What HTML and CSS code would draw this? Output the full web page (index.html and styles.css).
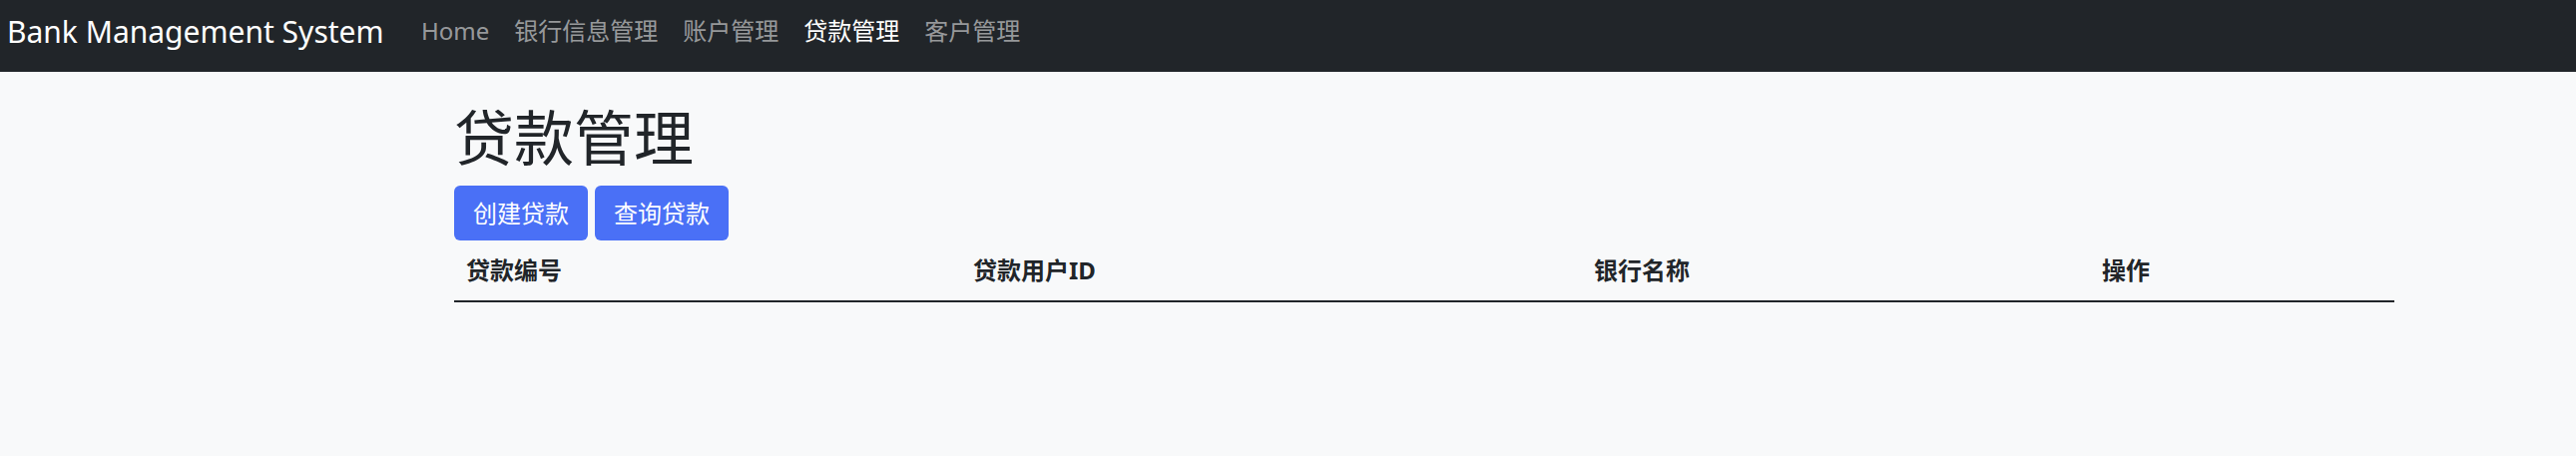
FILE: index.html
```html
<!DOCTYPE html>
<html lang="zh-CN">
<head>
<meta charset="utf-8">
<title>Bank Management System</title>
<link rel="stylesheet" href="styles.css">
</head>
<body>
<nav class="navbar">
  <a class="brand" href="#">Bank Management System</a>
  <ul class="nav">
    <li><a class="nav-link" href="#">Home</a></li>
    <li><a class="nav-link" href="#">银行信息管理</a></li>
    <li><a class="nav-link" href="#">账户管理</a></li>
    <li><a class="nav-link active" href="#">贷款管理</a></li>
    <li><a class="nav-link" href="#">客户管理</a></li>
  </ul>
</nav>
<main class="content">
  <h1 class="title">贷款管理</h1>
  <div class="actions">
    <button class="btn">创建贷款</button>
    <button class="btn">查询贷款</button>
  </div>
  <table class="table">
    <thead>
      <tr>
        <th class="col-id">贷款编号</th>
        <th class="col-user">贷款用户ID</th>
        <th class="col-bank">银行名称</th>
        <th class="col-op">操作</th>
      </tr>
    </thead>
    <tbody></tbody>
  </table>
</main>
</body>
</html>
```

FILE: styles.css
```css
* { box-sizing: border-box; }

html, body {
  margin: 0;
  padding: 0;
}

body {
  background: #f8f9fa;
  color: #212529;
  font-family: "Noto Sans", "Noto Sans CJK SC", sans-serif;
  font-size: 24px;
  line-height: 1.5;
  min-height: 457px;
}

.navbar {
  display: flex;
  align-items: flex-start;
  height: 72px;
  padding: 9px 0 0 7px;
  background: #212529;
}

.brand {
  font-size: 30px;
  line-height: 45px;
  color: #fff;
  text-decoration: none;
  margin-right: 25px;
  white-space: nowrap;
}

.nav {
  display: flex;
  list-style: none;
  margin: 4px 0 0 0;
  padding: 0;
}

.nav-link {
  display: block;
  padding: 0 12.5px;
  font-size: 24px;
  line-height: 36px;
  color: rgba(255, 255, 255, 0.55);
  text-decoration: none;
  white-space: nowrap;
}

.nav-link.active {
  color: #fff;
}

.content {
  width: 1944px;
  margin-left: 455px;
  padding-top: 30px;
}

.title {
  margin: 0 0 12px 0;
  font-size: 60px;
  line-height: 72px;
  font-weight: 400;
}

.actions {
  display: flex;
  gap: 7px;
}

.btn {
  font-family: inherit;
  font-size: 24px;
  line-height: 36px;
  padding: 9.5px 19px;
  border: 0;
  border-radius: 6px;
  background: #4a70f6;
  color: #fff;
  cursor: pointer;
}

.table {
  width: 100%;
  border-collapse: collapse;
}

.table th {
  text-align: left;
  font-weight: 700;
  padding: 12px;
  line-height: 36px;
  border-bottom: 2px solid #212529;
}

.col-id { width: 508px; }
.col-user { width: 622px; }
.col-bank { width: 509px; }
.col-op { width: 305px; }
```
